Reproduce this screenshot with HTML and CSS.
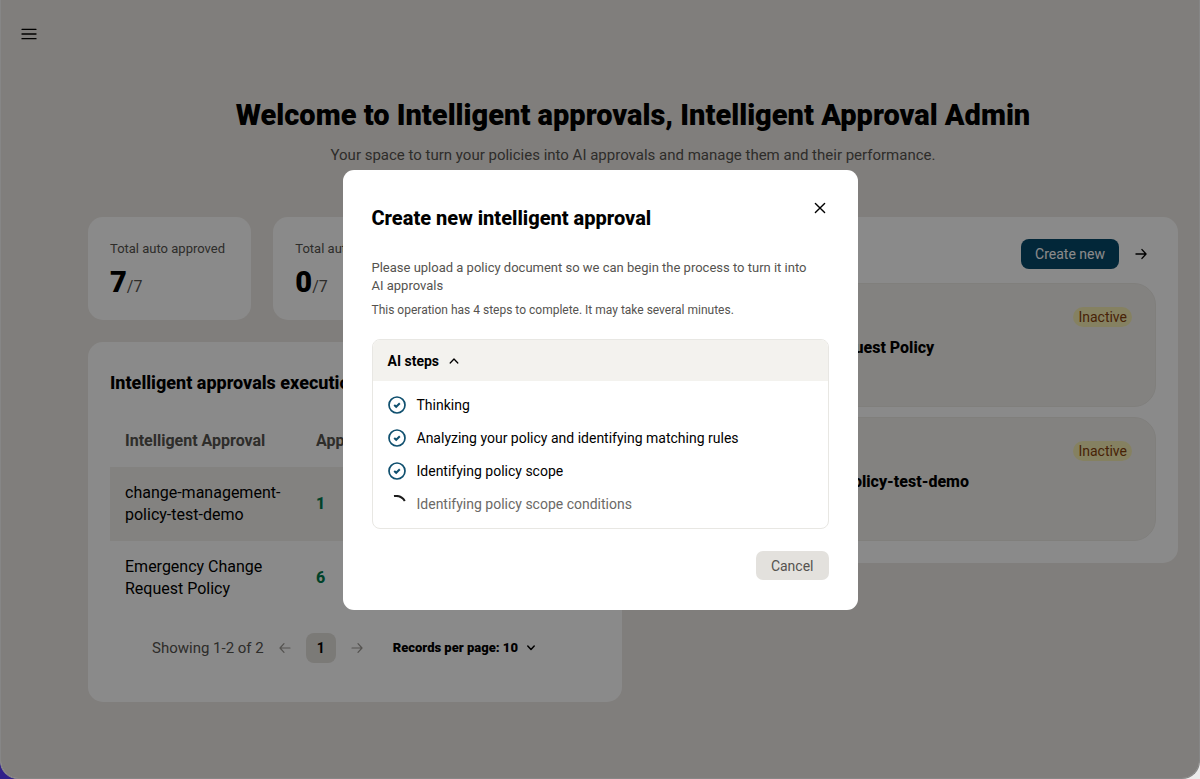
FILE: index.html
```html
<!DOCTYPE html>
<html lang="en">

<head>
  <meta charset="UTF-8" />
  <meta name="viewport" content="width=device-width, initial-scale=1.0" />
  <title>Intelligent approvals</title>
  <link rel="stylesheet" href="styles.css">
</head>

<body>
  <div class="window">
    <nav class="sidebar">
      <button class="icon-btn" aria-label="Open menu">
        <svg width="16" height="12" viewBox="0 0 16 12" fill="none" stroke="currentColor" stroke-width="1.3" stroke-linecap="round">
          <path d="M1 1.3h14M1 6h14M1 10.7h14" />
        </svg>
      </button>
    </nav>

    <main class="content">
      <header class="welcome">
        <h1>Welcome to Intelligent approvals, Intelligent Approval Admin</h1>
        <p>Your space to turn your policies into AI approvals and manage them and their performance.</p>
      </header>

      <div class="columns">
        <div class="column">
          <div class="stats">
            <section class="card stat">
              <h2>Total auto approved</h2>
              <p><strong>7</strong>/7</p>
            </section>
            <section class="card stat">
              <h2>Total auto rejected</h2>
              <p><strong>0</strong>/7</p>
            </section>
            <section class="card stat"></section>
          </div>

          <section class="card executions">
            <h2>Intelligent approvals execution</h2>
            <table>
              <thead>
                <tr>
                  <th class="name-col">Intelligent Approval</th>
                  <th>Approved</th>
                </tr>
              </thead>
              <tbody>
                <tr>
                  <td>change-management-policy-test-demo</td>
                  <td class="count">1</td>
                </tr>
                <tr>
                  <td>Emergency Change Request Policy</td>
                  <td class="count">6</td>
                </tr>
              </tbody>
            </table>
            <div class="pagination">
              <span>Showing 1-2 of 2</span>
              <button class="icon-btn" aria-label="Previous page" disabled>
                <svg width="12" height="12" viewBox="0 0 12 12" fill="none" stroke="currentColor" stroke-width="1.2" stroke-linecap="round" stroke-linejoin="round">
                  <path d="M11 6H1M5 1.6L1 6l4 4.4" />
                </svg>
              </button>
              <button class="page">1</button>
              <button class="icon-btn" aria-label="Next page" disabled>
                <svg width="12" height="12" viewBox="0 0 12 12" fill="none" stroke="currentColor" stroke-width="1.2" stroke-linecap="round" stroke-linejoin="round">
                  <path d="M1 6h10M7 1.6L11 6l-4 4.4" />
                </svg>
              </button>
              <button class="records">
                Records per page: 10
                <svg width="10" height="6" viewBox="0 0 10 6" fill="none" stroke="currentColor" stroke-width="1.5" stroke-linecap="round" stroke-linejoin="round">
                  <path d="M1.8 1L5 4.4 8.200 1" />
                </svg>
              </button>
            </div>
          </section>
        </div>

        <section class="card approvals">
          <div class="approvals-head">
            <button class="primary">Create new</button>
            <button class="icon-btn" aria-label="View all">
              <svg width="12" height="12" viewBox="0 0 12 12" fill="none" stroke="currentColor" stroke-width="1.4" stroke-linecap="round" stroke-linejoin="round">
                <path d="M1 6h10M7 1.6L11 6l-4 4.4" />
              </svg>
            </button>
          </div>
          <article class="approval">
            <span class="badge">Inactive</span>
            <h3>Emergency Change Request Policy</h3>
          </article>
          <article class="approval">
            <span class="badge">Inactive</span>
            <h3>change-management-policy-test-demo</h3>
          </article>
        </section>
      </div>
    </main>

    <div class="overlay">
      <div class="dialog" role="dialog" aria-modal="true" aria-labelledby="dialog-title">
        <div class="dialog-head">
          <h2 id="dialog-title">Create new intelligent approval</h2>
          <button class="icon-btn close" aria-label="Close">
            <svg width="12" height="12" viewBox="0 0 12 12" fill="none" stroke="currentColor" stroke-width="1.4" stroke-linecap="round">
              <path d="M1.400 1.400l9.200 9.200M10.600 1.400l-9.200 9.200" />
            </svg>
          </button>
        </div>
        <p class="intro">Please upload a policy document so we can begin the process to turn it into AI approvals</p>
        <p class="note">This operation has 4 steps to complete. It may take several minutes.</p>

        <div class="steps">
          <button class="steps-toggle" aria-expanded="true">
            AI steps
            <svg width="10" height="6" viewBox="0 0 10 6" fill="none" stroke="currentColor" stroke-width="1.3" stroke-linecap="round" stroke-linejoin="round">
              <path d="M1.2 5L5 1l3.8 4" />
            </svg>
          </button>
          <ul>
            <li>
              <svg class="done" width="18" height="18" viewBox="0 0 18 18" fill="none">
                <circle cx="9" cy="9" r="8" stroke="currentColor" stroke-width="1.7" />
                <path d="M6.2 8.9l2 1.9 3.6-3.6" stroke="currentColor" stroke-width="2" />
              </svg>
              Thinking
            </li>
            <li>
              <svg class="done" width="18" height="18" viewBox="0 0 18 18" fill="none">
                <circle cx="9" cy="9" r="8" stroke="currentColor" stroke-width="1.7" />
                <path d="M6.2 8.9l2 1.9 3.6-3.6" stroke="currentColor" stroke-width="2" />
              </svg>
              Analyzing your policy and identifying matching rules
            </li>
            <li>
              <svg class="done" width="18" height="18" viewBox="0 0 18 18" fill="none">
                <circle cx="9" cy="9" r="8" stroke="currentColor" stroke-width="1.7" />
                <path d="M6.2 8.9l2 1.9 3.6-3.6" stroke="currentColor" stroke-width="2" />
              </svg>
              Identifying policy scope
            </li>
            <li class="running">
              <svg class="spinner" width="18" height="18" viewBox="0 0 18 18" fill="none">
                <path d="M6 1.1C10.5 .4 14.6 2.2 16.800 6" stroke="currentColor" stroke-width="2" />
              </svg>
              Identifying policy scope conditions
            </li>
          </ul>
        </div>

        <div class="dialog-actions">
          <button class="cancel">Cancel</button>
        </div>
      </div>
    </div>
  </div>
</body>

</html>
```

FILE: styles.css
```css
* {
  box-sizing: border-box;
  margin: 0;
  padding: 0;
}

body {
  background: linear-gradient(to right, #30208a 50%, #ececec 50%);
  font-family: Roboto, "Liberation Sans", sans-serif;
  font-size: 16px;
  line-height: 22px;
  color: #000;
}

button {
  font: inherit;
  color: inherit;
  border: none;
  background: none;
  cursor: pointer;
}

svg {
  display: block;
  flex: none;
}

.icon-btn {
  display: flex;
  align-items: center;
  justify-content: center;
}

.window {
  position: relative;
  display: flex;
  min-height: 100vh;
  border: 1px solid #868686;
  border-top: none;
  border-radius: 0 0 18px 18px;
  overflow: hidden;
  background: #ede9e5;
}

.sidebar {
  width: 66px;
  padding: 28px 20px;
}

.content {
  flex: 1;
  padding: 97px 21px 48px;
}

.welcome {
  text-align: center;
  margin-bottom: 51px;
}

.welcome h1 {
  font-size: 29px;
  line-height: 36px;
  font-weight: 900;
  margin-bottom: 11px;
}

.welcome p {
  color: #55534f;
  font-size: 15px;
}

/* Dashboard cards */
.columns {
  display: grid;
  grid-template-columns: 1fr 1fr;
  align-items: start;
  gap: 22px;
}

.card {
  background: #fff;
  border-radius: 15px;
  padding: 22px;
}

.stats {
  display: grid;
  grid-template-columns: repeat(3, 1fr);
  gap: 22px;
  margin-bottom: 22px;
}

.stat {
  height: 103px;
  white-space: nowrap;
  overflow: hidden;
  color: #55534f;
}

.stat h2 {
  font-size: 13px;
  line-height: 20px;
  font-weight: 400;
  margin-bottom: 6px;
}

.stat p {
  line-height: 34px;
}

.stat strong {
  font-size: 29px;
  font-weight: 900;
  color: #000;
}

.executions {
  padding: 30px 22px 39px;
}

.executions h2 {
  font-size: 18px;
  font-weight: 800;
  margin-bottom: 21px;
}

table {
  width: 100%;
  border-collapse: collapse;
  text-align: left;
}

th,
td {
  padding: 15px;
}

th {
  color: #55534f;
  font-weight: 700;
}

.name-col {
  width: 191px;
}

tbody tr:nth-child(odd) {
  background: #f3f1ed;
}

.count {
  color: #007a4d;
  font-weight: 800;
}

.pagination {
  display: flex;
  align-items: center;
  gap: 15px;
  margin-top: 18px;
  padding-left: 42px;
  color: #55534f;
  font-size: 15px;
}

.pagination .icon-btn {
  color: #9b9893;
}

.page {
  width: 30px;
  height: 30px;
  border-radius: 8px;
  background: #e3e1dc;
  color: #000;
  font-size: 14px;
  font-weight: 700;
}

.pagination .records {
  display: flex;
  align-items: center;
  gap: 8px;
  margin-left: 15px;
  color: #000;
  font-size: 13px;
  font-weight: 900;
}

.approvals-head {
  display: flex;
  align-items: center;
  justify-content: flex-end;
  gap: 16px;
  margin-bottom: 14px;
  padding-right: 9px;
}

.primary {
  height: 30px;
  padding: 0 14px;
  border-radius: 8px;
  background: #05486a;
  color: #fff;
  font-size: 14px;
}

.approval {
  display: flex;
  flex-direction: column;
  height: 124px;
  padding: 23px 23px 23px 16px;
  border: 1px solid #eceae6;
  border-radius: 22px;
  background: #f3f1ed;
}

.approval + .approval {
  margin-top: 10px;
}

.approval h3 {
  margin-top: 10px;
  font-size: 16px;
  font-weight: 800;
}

.badge {
  align-self: flex-end;
  padding: 1px 5px;
  border-radius: 10px;
  background: #f6efb4;
  color: #853f0c;
  font-size: 14px;
  line-height: 18px;
}

/* Dialog */
.overlay {
  position: absolute;
  inset: 0;
  display: flex;
  align-items: center;
  justify-content: center;
  padding-top: 2px;
  background: rgba(0, 0, 0, 0.46);
}

.dialog {
  width: 515px;
  padding: 29px 29px 30px;
  border-radius: 11px;
  background: #fff;
  color: #55534f;
}

.dialog-head {
  display: flex;
  justify-content: space-between;
  margin-bottom: 29px;
  color: #000;
}

.dialog-head h2 {
  padding-top: 7px;
  font-size: 20px;
  line-height: 24px;
  font-weight: 800;
}

.close {
  width: 18px;
  height: 18px;
}

.intro {
  font-size: 13px;
  line-height: 18px;
  margin-bottom: 6px;
  padding-right: 16px;
}

.note {
  font-size: 12px;
  line-height: 18px;
}

.steps {
  margin: 20px 0 22px;
  border: 1px solid #e8e7e3;
  border-radius: 8px;
  overflow: hidden;
}

.steps-toggle {
  display: flex;
  align-items: center;
  gap: 10px;
  width: 100%;
  height: 41px;
  padding: 0 15px;
  background: #f3f2ee;
  color: #000;
  font-size: 14px;
  font-weight: 700;
}

.steps ul {
  display: grid;
  gap: 15px;
  padding: 15px;
  list-style: none;
}

.steps li {
  display: flex;
  align-items: center;
  gap: 11px;
  color: #000;
  font-size: 14px;
  line-height: 18px;
}

.steps .running {
  color: #6b6966;
}

.steps .done {
  color: #10506f;
}

.steps .spinner {
  color: #1c1c1c;
}

.dialog-actions {
  display: flex;
  justify-content: flex-end;
}

.cancel {
  height: 29px;
  padding: 0 15px;
  border-radius: 7px;
  background: #e3e1dd;
  color: #55534f;
  font-size: 14px;
}
```
